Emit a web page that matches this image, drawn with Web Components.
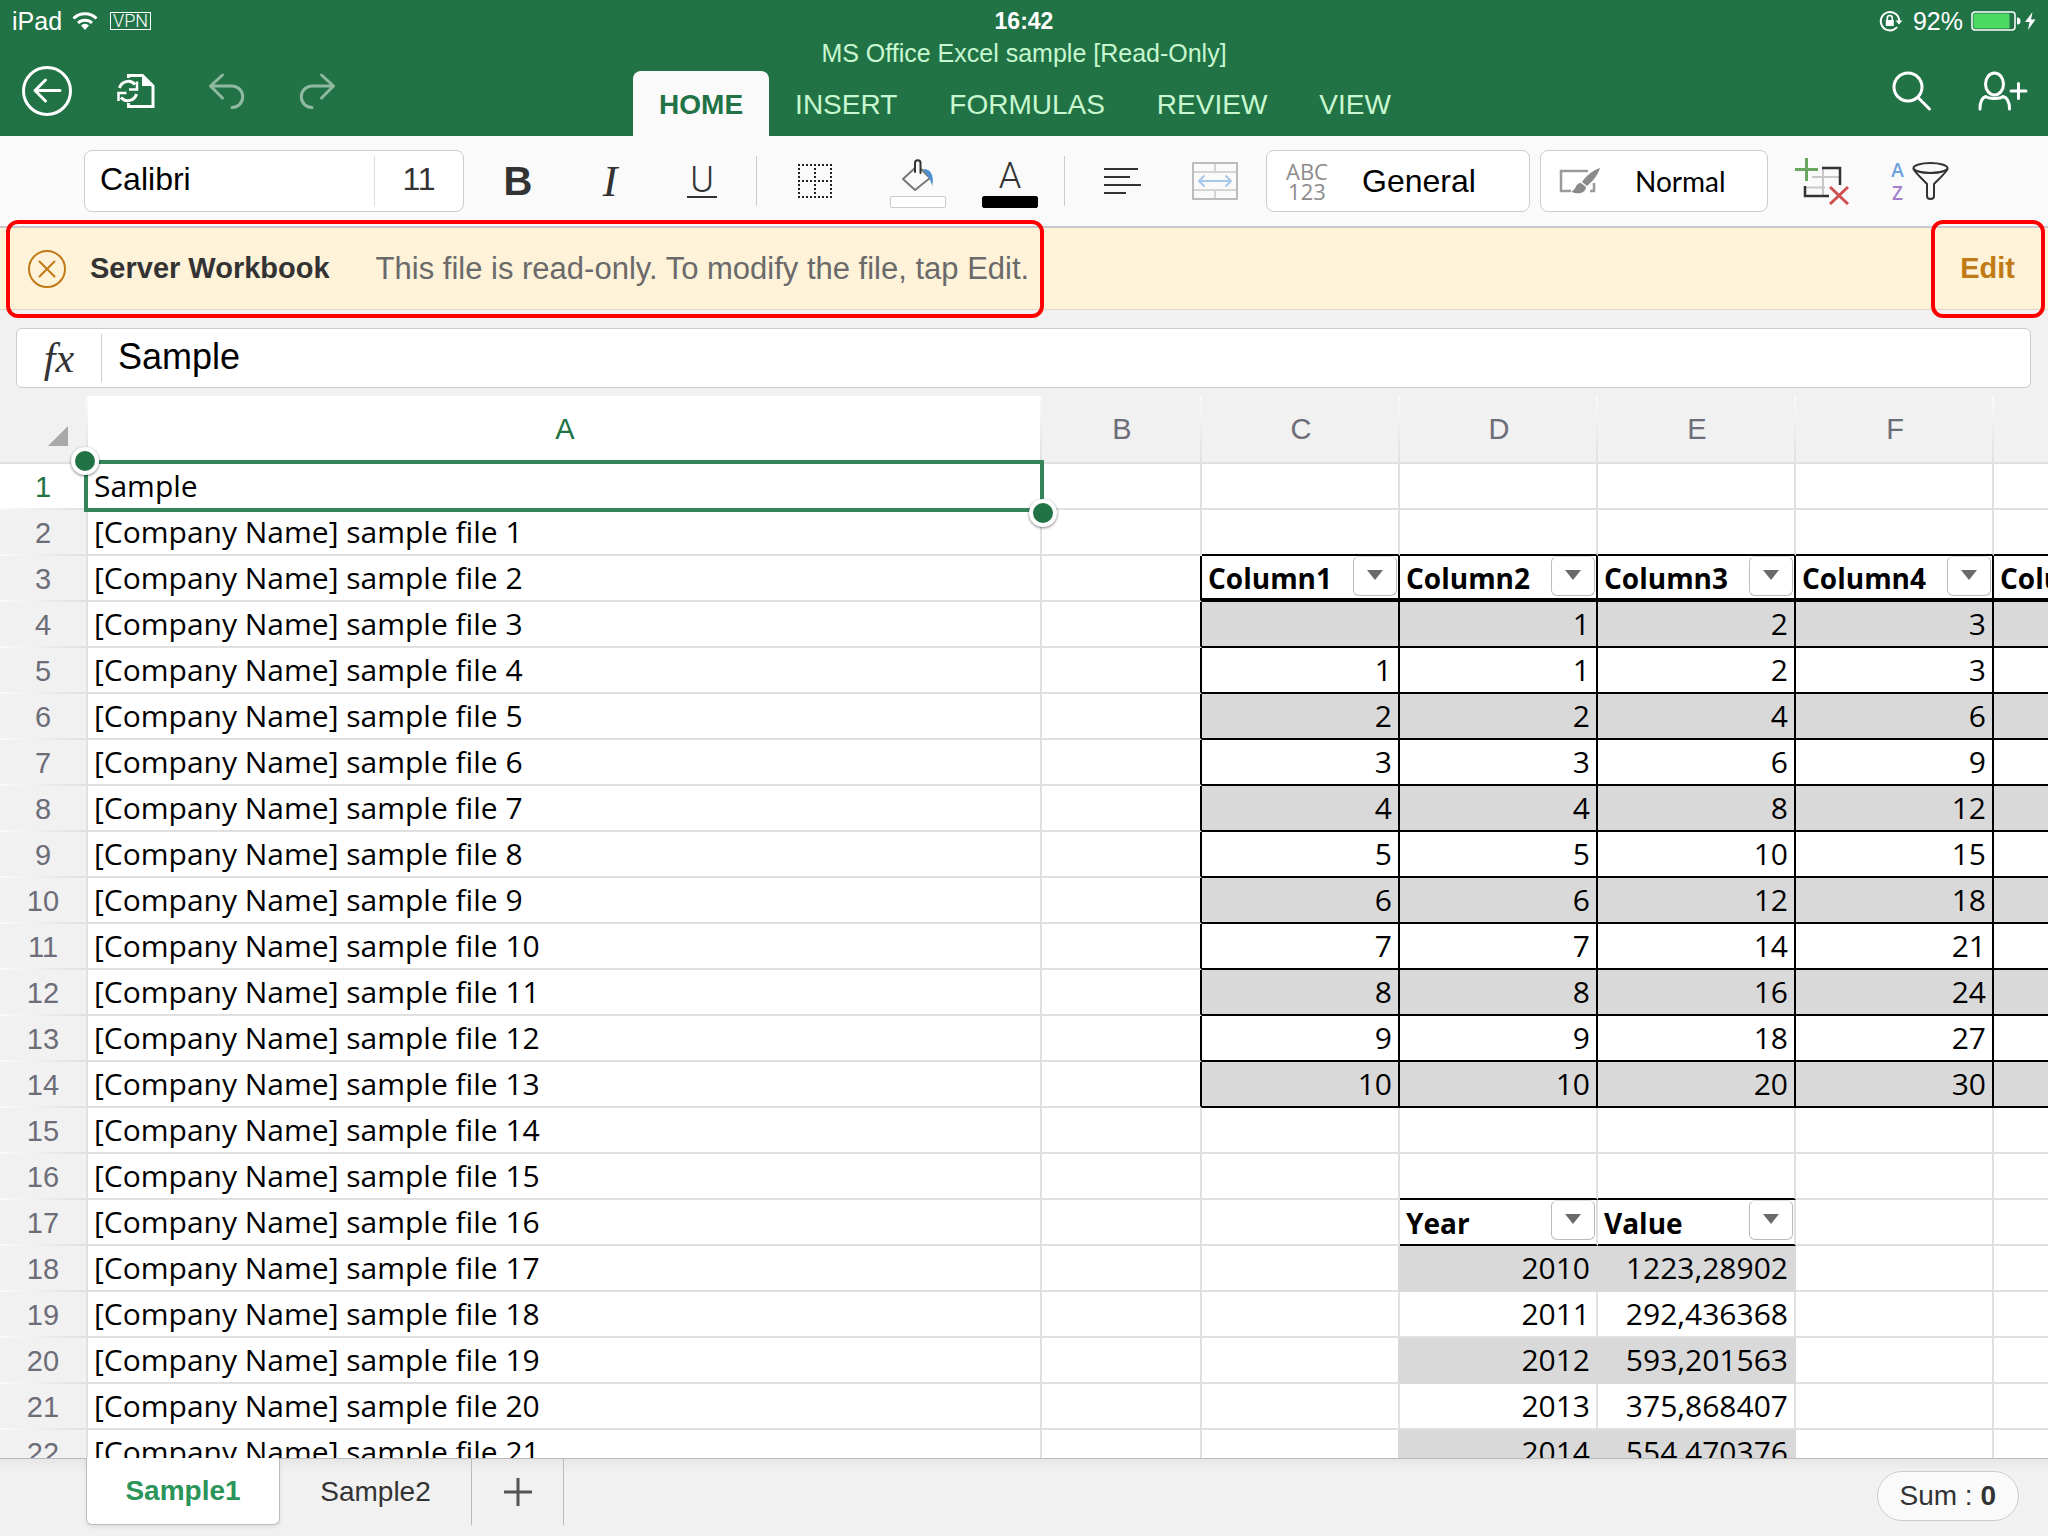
<!DOCTYPE html>
<html lang="en">
<head>
<meta charset="utf-8">
<title>MS Office Excel sample</title>
<style>
    html, body { margin: 0; height: 100%; }
    body { font-family: "Liberation Sans", Arial, sans-serif; background: #f1f1f1; overflow: hidden; }
</style>
</head>
<body>
<excel-app></excel-app>

<script>
const base = `
    * { box-sizing: border-box; }
    button { border: 0; padding: 0; margin: 0; background: none; color: inherit; font: inherit; cursor: pointer; }
    svg { display: block; fill: none; stroke-linecap: round; stroke-linejoin: round; }
`

const icons = {
    wifi: `<svg width="26" height="20" viewBox="0 0 26 20" stroke="#fff" stroke-width="3" style="stroke-linecap:butt"><path d="M1.5 7.5a16.5 16.5 0 0 1 23 0M6 12a10 10 0 0 1 14 0"/><path d="M13 19l-4-4.5a5.6 5.6 0 0 1 8 0z" fill="#fff" stroke="none"/></svg>`,
    lock: `<svg width="24" height="22" viewBox="0 0 24 22" stroke="#fff" stroke-width="2"><path d="M17.6 17.6A9.2 9.2 0 1 1 20.2 11"/><path d="M16.5 10.5h7l-3.500 4z" fill="#fff" stroke="none"/><path d="M6.800 10h8v6h-8z" fill="#fff" stroke="none"/><path d="M8.300 10V8a2.500 2.500 0 0 1 5 0v2" stroke-width="1.600"/></svg>`,
    battery: `<svg width="50" height="20" viewBox="0 0 50 20"><rect x="1" y="1" width="43" height="18" rx="3" stroke="#fff" stroke-width="1.500"/><rect x="2.500" y="2.500" width="36" height="15" rx="1" fill="#4cd964"/><path d="M46 6.500a3.500 3.500 0 0 1 0 7z" fill="#fff"/></svg>`,
    bolt: `<svg width="11" height="20" viewBox="0 0 11 20"><path d="M7.500 1L0 11h4.500L3 19l7.500-10.500H6z" fill="#fff"/></svg>`,
    back: `<svg width="50" height="50" viewBox="0 0 50 50" stroke="#fff" stroke-width="3"><circle cx="25" cy="25" r="23.500"/><path d="M38 24.500H13M23.500 14L13 24.500l10.500 10.500"/></svg>`,
    sync: `<svg width="40" height="36" viewBox="0 0 40 36" stroke="#fff" stroke-width="3" style="stroke-linecap:butt;stroke-linejoin:miter"><path d="M12.500 5V2.500h14L37 13v20.500H12.500V30"/><path d="M26 1l12.500 12H26z" fill="#fff" stroke="none"/><path d="M3.500 15a9 9 0 0 1 15.500-3.500M20.500 21a9 9 0 0 1-15.500 3.500"/><path d="M21 8.500v8h-8M2.500 28v-8h8" stroke-width="2.500"/></svg>`,
    undo: `<svg width="38" height="38" viewBox="0 0 38 38" stroke="#90b9a2" stroke-width="3"><path d="M14.500 3L2.500 14l12 12M2.500 14H24a10.500 10.500 0 0 1 0 21.500"/></svg>`,
    redo: `<svg width="38" height="38" viewBox="0 0 38 38" stroke="#90b9a2" stroke-width="3"><path d="M23.500 3l12 11-12 12M35.500 14H14a10.500 10.500 0 0 0 0 21.500"/></svg>`,
    search: `<svg width="40" height="40" viewBox="0 0 40 40" stroke="#fff" stroke-width="3"><circle cx="16" cy="16" r="14"/><path d="M26 26.500L37.500 38"/></svg>`,
    person: `<svg width="50" height="40" viewBox="0 0 50 40" stroke="#fff" stroke-width="3"><ellipse cx="16.500" cy="13" rx="9" ry="11"/><path d="M2 38c0-8 2-11.500 6-12.500 2.500 2.500 14 2.500 17 0 4 1 6.500 4.500 6.500 12.500" /><path d="M33 20h15M40.500 12.500v15"/></svg>`,
    borders: `<svg width="36" height="36" viewBox="0 0 36 36" stroke="#222" stroke-width="2" stroke-dasharray="2 2" style="stroke-linecap:butt"><path d="M1 2h34M1 18h34M1 34h34M2 1v34M18 1v34M34 1v34"/></svg>`,
    fill: `<svg width="34" height="34" viewBox="0 0 34 34" stroke-width="2"><path d="M14 10L2 21l12 11 15-12-9-9" stroke="#777"/><path d="M14 14V5a2.700 2.700 0 0 1 5.500 0v10" stroke="#333"/><path d="M22 11c8 0 11 6 9.500 17l-3-7.500z" fill="#4a8fd0"/></svg>`,
    align: `<svg width="38" height="28" viewBox="0 0 38 28" stroke="#333" stroke-width="2" style="stroke-linecap:butt"><path d="M0 2h34M0 10h26M0 18h37M0 26h22"/></svg>`,
    merge: `<svg width="46" height="38" viewBox="0 0 46 38" stroke="#bcbcbc" stroke-width="2"><path d="M1 10h44M1 28h44M23 1v9M23 28v9" stroke="#d4d4d4"/><rect x="1" y="1" width="44" height="36"/><path d="M7 19h32M12 14l-5 5 5 5M34 14l5 5-5 5" stroke="#a5c8ea"/></svg>`,
    brush: `<svg width="42" height="28" viewBox="0 0 42 28"><path d="M29 4H2v20h10M35 16v8h-4" stroke="#9a9a9a" stroke-width="2.500" style="stroke-linecap:butt;stroke-linejoin:miter"/><path d="M41 1c-7 2-14 8-18 14l5 4c6-5 11-11 13-18zM22 16c-6 0-4 6-9.500 8.500 5 3.500 14.500 2 14.500-4.500z" fill="#8a8a8a"/></svg>`,
    cells: `<svg width="56" height="48" viewBox="0 0 56 48" stroke-width="2.500" style="stroke-linecap:butt;stroke-linejoin:miter"><path d="M29 11v27M18 20h28M11 30.500h20" stroke="#c8c8c8" stroke-width="2"/><path d="M28 11h18v17M11 29v10h24" stroke="#333"/><path d="M1 12.500h23M12.500 1v23" stroke="#6aa860" stroke-width="3"/><path d="M36 30l18 17M54 30L36 47" stroke="#d05050" stroke-width="3"/></svg>`,
    funnel: `<svg width="37" height="40" viewBox="0 0 37 40" stroke="#333" stroke-width="2"><path d="M2.500 8.500c4 4.500 28 4.500 32 0" stroke="#999"/><ellipse cx="18.500" cy="7" rx="17" ry="5"/><path d="M1.500 8c1 3 6 7 13.500 15v12c0 4 7 4 7 0V23C30 15 34.500 11 35.500 8"/></svg>`,
    close: `<svg width="40" height="40" viewBox="0 0 40 40" stroke="#c07a16" stroke-width="2"><circle cx="20" cy="20" r="18"/><path d="M12.500 12.500l15 15M27.500 12.500l-15 15"/></svg>`,
    corner: `<svg width="20" height="20" viewBox="0 0 20 20"><path d="M20 0v20H0z" fill="#a9a9a9"/></svg>`,
    arrow: `<svg width="16" height="10" viewBox="0 0 16 10"><path d="M0 0h16L8 10z" fill="#6a6a6a"/></svg>`,
    plus: `<svg width="28" height="28" viewBox="0 0 28 28" stroke="#555" stroke-width="3" style="stroke-linecap:butt"><path d="M0 14h28M14 0v28"/></svg>`
}

// Shared constructor: puts the styles and the markup in an open shadow root
class Part extends HTMLElement {
    constructor() {
        super()
        const root = this.attachShadow({ mode: "open" })
        const template = document.createElement("template")
        template.innerHTML = `<style>${base}${this.styles()}</style>${this.markup()}`
        root.append(template.content.cloneNode(true))
    }
    styles() { return "" }
    markup() { return "" }
}

class ExcelApp extends Part {
    styles() {
        return `:host { display: flex; flex-direction: column; height: 100vh; }
            sheet-grid { flex: 1; min-height: 0; }`
    }
    markup() {
        return `
            <app-header></app-header>
            <ribbon-bar></ribbon-bar>
            <notice-bar action="Edit"><b slot="title">Server Workbook</b>This file is read-only. To modify the file, tap Edit.</notice-bar>
            <formula-bar value="Sample"></formula-bar>
            <sheet-grid></sheet-grid>
            <sheet-tabs></sheet-tabs>`
    }
}

class AppHeader extends Part {
    styles() {
        return `
        :host { display: block; background: #217346; color: #fff; }
        .status, .nav { display: grid; grid-template-columns: 1fr auto 1fr; }
        .status { height: 40px; align-items: center; padding: 2px 12px 0; font-size: 25px; line-height: 28px; }
        .status b { font-size: 23px; }
        .side { display: flex; align-items: center; }
        .right { justify-content: flex-end; }
        .status .side { gap: 10px; }
        .vpn { border: 1px solid #fff; font: 300 18px/16px Roboto, sans-serif; padding: 0 2px; margin-left: 2px; }
        .status .power { gap: 4px; margin-left: -2px; }
        .title { text-align: center; font-size: 25px; line-height: 26px; color: #c8f7d0; }
        .nav { height: 70px; padding: 0 20px 0 22px; }
        .nav .side { height: 50px; }
        .left { gap: 44px; }
        .left .step { margin-left: 8px; }
        .nav .right { gap: 46px; }
        .tabs { display: flex; align-items: flex-end; }
        .tabs button { height: 65px; padding: 0 26px; font-size: 28px; line-height: 67px; color: #c8f7d0; border-radius: 8px 8px 0 0; }
        .tabs .on { background: #fafafa; color: #217346; font-weight: bold; }`
    }
    markup() {
        return `
        <div class="status">
            <div class="side"><span>iPad</span>${icons.wifi}<span class="vpn">VPN</span></div>
            <b>16:42</b>
            <div class="side right">${icons.lock}<span>92%</span><span class="side power">${icons.battery}${icons.bolt}</span></div>
        </div>
        <div class="title">MS Office Excel sample [Read-Only]</div>
        <div class="nav">
            <div class="side left">
                <button aria-label="Back">${icons.back}</button>
                <button aria-label="File">${icons.sync}</button>
                <button class="step" aria-label="Undo">${icons.undo}</button>
                <button class="step" aria-label="Redo">${icons.redo}</button>
            </div>
            <nav class="tabs">
                <button class="on">HOME</button><button>INSERT</button><button>FORMULAS</button><button>REVIEW</button><button>VIEW</button>
            </nav>
            <div class="side right">
                <button aria-label="Search">${icons.search}</button>
                <button aria-label="Share">${icons.person}</button>
            </div>
        </div>`
    }
}

class RibbonBar extends Part {
    styles() {
        return `
        :host { display: flex; align-items: center; height: 92px; padding: 0 0 0 84px; background: #fafafa; border-bottom: 2px solid #c8c8cc; color: #333; }
        .box { display: flex; align-items: center; height: 62px; background: #fff; border: 1px solid #ccc; border-radius: 8px; font-size: 32px; color: #000; }
        .font { width: 380px; margin-right: 8px; }
        .font button { height: 50px; padding-bottom: 4px; }
        .font .name { flex: 1; text-align: left; padding-left: 15px; }
        .font .size { width: 89px; border-left: 1px solid #ddd; color: #333; }
        .tool { display: flex; flex-direction: column; align-items: center; justify-content: center; width: 92px; height: 62px; }
        .b { font-size: 40px; font-weight: bold; }
        .i { font: italic 44px "Liberation Serif", serif; }
        .thin { font: 300 36px/32px Roboto, sans-serif; }
        .u span { border-bottom: 2px solid #333; padding: 0 3px; }
        .sep { width: 1px; height: 50px; background: #ccc; margin: 0 12px 0 8px; }
        .fills { display: flex; margin-left: 11px; }
        .fills .tool { justify-content: flex-end; gap: 4px; }
        .swatch { width: 56px; height: 12px; border: 1px solid #ccc; border-radius: 2px; background: #fff; margin-bottom: 4px; }
        .black { background: #000; border-color: #000; }
        .number { width: 264px; margin: 0 10px 0 5px; padding: 0 0 0 19px; }
        .abc { font: 22px/20px "Open Sans", sans-serif; color: #8c8c8c; }
        .number .abc { margin-right: 34px; }
        .style { width: 228px; margin-right: 8px; padding-left: 18px; gap: 34px; font: 28px Lato, sans-serif; }
        .sort { flex-direction: row; gap: 8px; margin-left: 6px; }
        .az { display: flex; flex-direction: column; gap: 3px; font: 600 19px/20px "Open Sans", sans-serif; color: #6aa0dc; }
        .z { color: #a080cc; }`
    }
    markup() {
        return `
        <div class="box font"><button class="name">Calibri</button><button class="size">11</button></div>
        <button class="tool b">B</button>
        <button class="tool i">I</button>
        <button class="tool thin u"><span>U</span></button>
        <div class="sep"></div>
        <button class="tool" aria-label="Borders">${icons.borders}</button>
        <div class="fills">
            <button class="tool" aria-label="Fill colour">${icons.fill}<span class="swatch"></span></button>
            <button class="tool thin" aria-label="Font colour"><span>A</span><span class="swatch black"></span></button>
        </div>
        <div class="sep"></div>
        <button class="tool" aria-label="Align">${icons.align}</button>
        <button class="tool" aria-label="Merge">${icons.merge}</button>
        <button class="box number"><span class="abc">ABC<br>123</span>General</button>
        <button class="box style">${icons.brush}<span>Normal</span></button>
        <button class="tool" aria-label="Insert and delete cells">${icons.cells}</button>
        <button class="tool sort" aria-label="Sort and filter"><span class="az"><span>A</span><span class="z">Z</span></span>${icons.funnel}</button>`
    }
}

// Red frame that runs a little over the edges of the bar it sits in
class RedFrame extends Part {
    styles() {
        return `:host { display: flex; align-items: center; position: relative; z-index: 1; height: 98px; margin: -9px 0; border: 4px solid #f00; border-radius: 12px; }`
    }
    markup() { return `<slot></slot>` }
}

class NoticeBar extends Part {
    styles() {
        return `
        :host { display: flex; align-items: center; justify-content: space-between; height: 82px; padding: 0 3px 0 6px; background: #fef2d9; border-bottom: 1px solid #e0d8c6; color: #6a6a6a; }
        .close { margin: 0 22px 0 17px; }
        .title { color: #333; font-size: 29px; margin: 0 46px 0 1px; }
        .text { font-size: 31px; margin-right: 11px; }
        .edit { padding: 0 26px 0 25px; height: 90px; color: #c07a16; font-size: 29px; font-weight: bold; }`
    }
    markup() {
        return `
        <red-frame>
            <button class="close" aria-label="Close">${icons.close}</button>
            <span class="title"><slot name="title"></slot></span>
            <span class="text"><slot></slot></span>
        </red-frame>
        <red-frame><button class="edit">${this.getAttribute("action") ?? "Edit"}</button></red-frame>`
    }
}

class FormulaBar extends Part {
    styles() {
        return `
        :host { display: block; padding: 18px 17px 8px 16px; }
        .box { display: flex; align-items: center; height: 60px; background: #fff; border: 1px solid #ccc; border-radius: 6px; }
        label { width: 85px; height: 48px; border-right: 1px solid #ccc; text-align: center; font: italic 42px/48px "Liberation Serif", serif; color: #333; }
        input { flex: 1; min-width: 0; height: 48px; border: 0; outline: 0; padding: 0 16px 2px; background: none; font: 36px/46px "Liberation Sans", sans-serif; color: #000; }`
    }
    markup() {
        return `<div class="box"><label for="fx">fx</label><input id="fx" value="${this.getAttribute("value") ?? ""}"></div>`
    }
}

class SheetGrid extends Part {
    styles() {
        return `
        :host { display: block; overflow: hidden; background: #fff; }
        table { width: 100%; table-layout: fixed; border-collapse: separate; border-spacing: 0; }
        .head { width: 88px; } .a { width: 954px; } .bcol { width: 160px; } .c { width: 198px; }
        th, td { height: 46px; padding: 0 6px; border: 0 solid #e0e0e0; border-width: 0 2px 2px 0; overflow: hidden; white-space: nowrap; }
        td { font: 30px/44px "Open Sans", sans-serif; color: #000; text-align: left; }
        td:last-child { border-right: 0; }
        th { font: 29px/44px "Liberation Sans", sans-serif; color: #6d6d78; background: #f1f1f1; }
        thead th { height: 68px; border-right: 0; background: linear-gradient(#fafafa, #e0e0e0) right / 2px 100% no-repeat #f1f1f1; }
        thead th:last-child { background: #f1f1f1; }
        thead .on { background-color: #fff; }
        tbody th { border-bottom: 0; padding: 0; background: linear-gradient(90deg, #fafafa, #e0e0e0) bottom / 100% 2px no-repeat #f1f1f1; }
        tbody .on { background-color: #fff; }
        th.on { color: #217346; }
        .all { padding: 14px 18px 0 48px; }
        td.num { text-align: right; }
        .hdr { font-size: 28px; font-weight: bold; position: relative; }
        .grid { border-color: #000; }
        .thick { border-bottom: 4px solid #000; }
        .under { border-bottom-color: #000; }
        .edge { border-right-color: #000; }
        .grey { background: #d9d9d9; }
        .band { background: #d9d9d9; border-color: #d9d9d9; }
        .lead { border-right-color: #d9d9d9; }
        .cell { height: 42px; }
        .cell button { position: absolute; top: 0; right: 1px; display: flex; align-items: center; justify-content: center; width: 44px; height: 40px; background: #fff; border: 1px solid #bbb; border-top-color: #ddd; border-radius: 6px; padding-bottom: 2px; }
        td.sel { position: relative; overflow: visible; }
        .frame { position: absolute; inset: -4px; border: 4px solid #34855b; z-index: 1; }
        .dot { position: absolute; width: 28px; height: 28px; border: 4px solid #fff; border-radius: 50%; background: #217346; box-shadow: 0 1px 3px rgba(0, 0, 0, .5); }
        .start { left: -17px; top: -17px; }
        .end { right: -17px; bottom: -19px; }`
    }
    markup() {
        const rows = []
        for (let r = 1; r <= 22; r++) {
            rows.push(`<tr><th class="${r == 1 ? "on" : ""}">${r}</th>${this.row(r)}</tr>`)
        }
        return `
        <table>
            <colgroup><col class="head"><col class="a"><col class="bcol"><col class="c"><col class="c"><col class="c"><col class="c"><col></colgroup>
            <thead><tr><th class="all">${icons.corner}</th><th class="on">A</th><th>B</th><th>C</th><th>D</th><th>E</th><th>F</th><th></th></tr></thead>
            <tbody>${rows.join("")}</tbody>
        </table>`
    }
    row(r) {
        const first = r == 1
            ? `<td class="sel">Sample<div class="frame"><span class="dot start"></span><span class="dot end"></span></div></td>`
            : `<td>[Company Name] sample file ${r - 1}</td>`
        const inTable = r >= 3 && r <= 14
        let out = first + `<td class="${inTable ? "edge" : ""}"></td>`
        for (let c = 0; c < 5; c++) {
            out += inTable ? this.tableCell(r, c) : this.yearCell(r, c)
        }
        return out
    }
    header(text, cls, filter = true) {
        return `<td class="hdr ${cls}"><div class="cell">${text}${filter ? `<button aria-label="Filter ${text}">${icons.arrow}</button>` : ""}</div></td>`
    }
    tableCell(r, c) {
        if (r == 3) return this.header(`Column${c + 1}`, "grid thick", c < 4)
        // row 4 repeats the multipliers, the rows below multiply them by 1 to 10
        const n = r - 4
        const value = r == 4 ? (c || "") : n * (c || 1)
        return `<td class="num grid ${r % 2 ? "" : "grey"}">${c < 4 ? value : ""}</td>`
    }
    yearCell(r, c) {
        const years = [[2010, "1223,28902"], [2011, "292,436368"], [2012, "593,201563"], [2013, "375,868407"], [2014, "554,470376"]]
        if (c == 1 || c == 2) {
            if (r == 16) return `<td class="under"></td>`
            if (r == 17) return this.header(c == 1 ? "Year" : "Value", "under")
            if (r > 17) return `<td class="num ${r % 2 ? "" : "band"}">${years[r - 18][c - 1]}</td>`
        }
        if (c == 0 && r > 17 && r % 2 == 0) return `<td class="lead"></td>`
        return `<td class="${r == 2 ? "under" : ""}"></td>`
    }
}

class SheetTabs extends Part {
    styles() {
        return `
        :host { display: flex; align-items: flex-start; height: 78px; padding: 0 29px 0 86px; background: linear-gradient(#e6e6e6, #f1f1f1 12px); border-top: 1px solid #bbb; font-size: 28px; color: #333; position: relative; z-index: 2; }
        button { height: 66px; border-right: 1px solid #bbb; }
        .tab { width: 192px; }
        .on { width: 194px; height: 67px; margin-top: -1px; background: #fff; border: 1px solid #bbb; border-top: 0; border-radius: 0 0 6px 6px; color: #2a9459; font-weight: bold; box-shadow: 0 2px 4px rgba(0, 0, 0, .08); }
        .add { width: 92px; display: flex; align-items: center; justify-content: center; }
        .sum { height: 50px; margin: 12px 0 0 auto; padding: 0 22px; border: 1px solid #ccc; border-radius: 25px; background: #fafafa; }`
    }
    markup() {
        return `
        <button class="tab on">Sample1</button>
        <button class="tab">Sample2</button>
        <button class="add" aria-label="Add sheet">${icons.plus}</button>
        <button class="sum">Sum : <b>0</b></button>`
    }
}

customElements.define("red-frame", RedFrame)
customElements.define("app-header", AppHeader)
customElements.define("ribbon-bar", RibbonBar)
customElements.define("notice-bar", NoticeBar)
customElements.define("formula-bar", FormulaBar)
customElements.define("sheet-grid", SheetGrid)
customElements.define("sheet-tabs", SheetTabs)
customElements.define("excel-app", ExcelApp)
</script>
</body>
</html>
